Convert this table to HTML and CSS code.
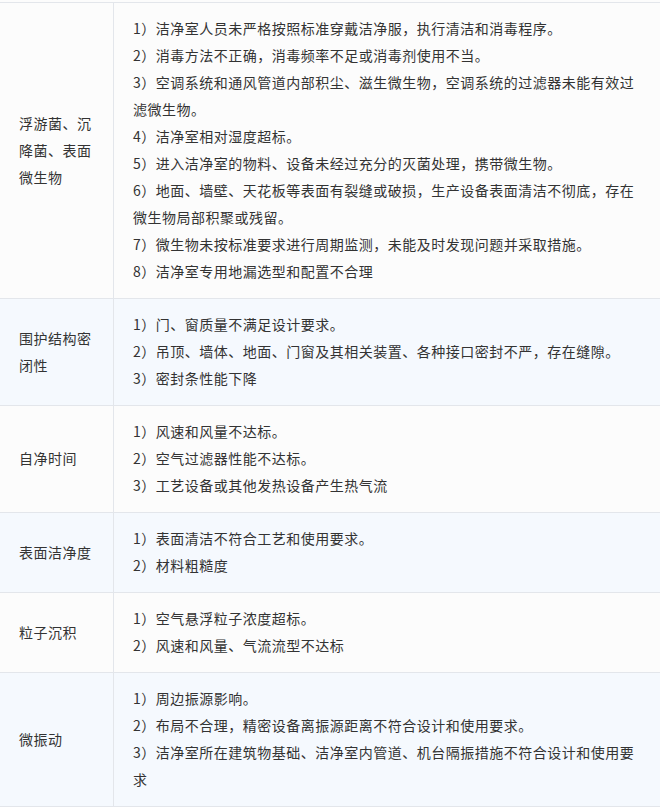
FILE: index.html
```html
<!DOCTYPE html>
<html lang="zh-CN">
<head>
  <meta charset="UTF-8">
  <title>洁净室常见问题</title>
  <link rel="stylesheet" href="styles.css">
</head>
<body>

  <table class="issue-table">
    <tr class="row-plain">
      <td class="item">浮游菌、沉降菌、表面微生物</td>
      <td class="causes">
        <p>1）洁净室人员未严格按照标准穿戴洁净服，执行清洁和消毒程序。</p>
        <p>2）消毒方法不正确，消毒频率不足或消毒剂使用不当。</p>
        <p>3）空调系统和通风管道内部积尘、滋生微生物，空调系统的过滤器未能有效过滤微生物。</p>
        <p>4）洁净室相对湿度超标。</p>
        <p>5）进入洁净室的物料、设备未经过充分的灭菌处理，携带微生物。</p>
        <p>6）地面、墙壁、天花板等表面有裂缝或破损，生产设备表面清洁不彻底，存在微生物局部积聚或残留。</p>
        <p>7）微生物未按标准要求进行周期监测，未能及时发现问题并采取措施。</p>
        <p>8）洁净室专用地漏选型和配置不合理</p>
      </td>
    </tr>
    <tr class="row-tint">
      <td class="item">围护结构密闭性</td>
      <td class="causes">
        <p>1）门、窗质量不满足设计要求。</p>
        <p>2）吊顶、墙体、地面、门窗及其相关装置、各种接口密封不严，存在缝隙。</p>
        <p>3）密封条性能下降</p>
      </td>
    </tr>
    <tr class="row-plain">
      <td class="item">自净时间</td>
      <td class="causes">
        <p>1）风速和风量不达标。</p>
        <p>2）空气过滤器性能不达标。</p>
        <p>3）工艺设备或其他发热设备产生热气流</p>
      </td>
    </tr>
    <tr class="row-tint">
      <td class="item">表面洁净度</td>
      <td class="causes">
        <p>1）表面清洁不符合工艺和使用要求。</p>
        <p>2）材料粗糙度</p>
      </td>
    </tr>
    <tr class="row-plain">
      <td class="item">粒子沉积</td>
      <td class="causes">
        <p>1）空气悬浮粒子浓度超标。</p>
        <p>2）风速和风量、气流流型不达标</p>
      </td>
    </tr>
    <tr class="row-tint">
      <td class="item">微振动</td>
      <td class="causes">
        <p>1）周边振源影响。</p>
        <p>2）布局不合理，精密设备离振源距离不符合设计和使用要求。</p>
        <p>3）洁净室所在建筑物基础、洁净室内管道、机台隔振措施不符合设计和使用要求</p>
      </td>
    </tr>
  </table>

</body>
</html>
```

FILE: styles.css
```css
body {
  margin: 0;
  padding-top: 2px;
  background-color: #fcfcfc;
  font-family: "Microsoft YaHei", "Noto Sans CJK SC", sans-serif;
  font-size: 14px;
  letter-spacing: 0.5px;
  color: #333;
}

.issue-table {
  width: 100%;
  border-collapse: collapse;
  border-top: 1px solid #e3e6eb;
}

.issue-table td {
  padding: 12px 19px 13px;
  line-height: 27px;
  border-bottom: 1px solid #e3e6eb;
  vertical-align: middle;
}

.item {
  width: 75px;
  border-right: 1px solid #e3e6eb;
}

.causes p {
  margin: 0;
}

.row-plain {
  background-color: #fcfcfc;
}

.row-tint {
  background-color: #f5f9fe;
}
```
